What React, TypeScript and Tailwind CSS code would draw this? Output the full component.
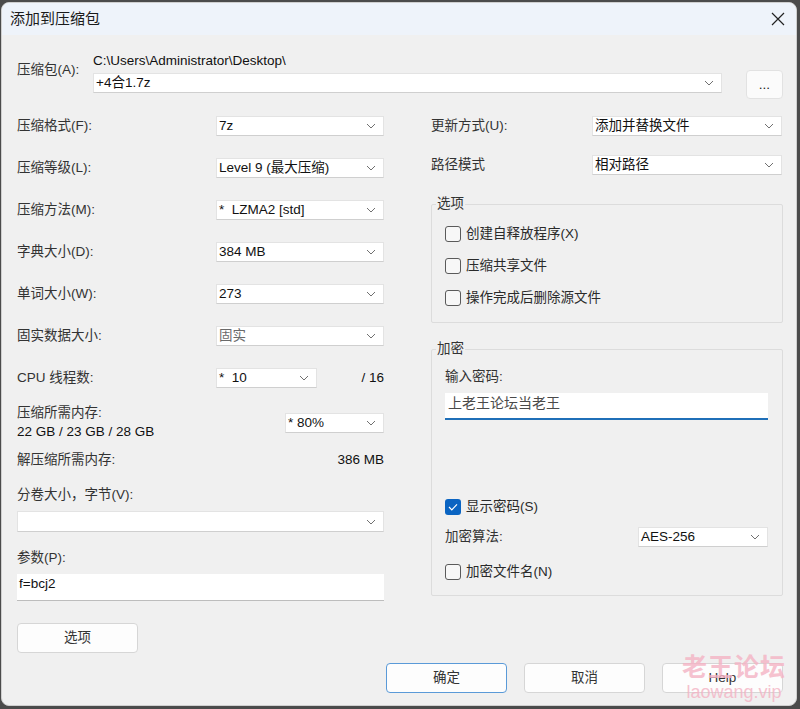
const Chevron = () => (
  <svg width="10" height="6" viewBox="0 0 10 6" className="shrink-0">
    <path d="M1 1l4 4 4-4" fill="none" stroke="#707070" strokeWidth="1" />
  </svg>
);

const Combo = ({ value = "", className = "", muted = false }: { value?: string; className?: string; muted?: boolean }) => (
  <div
    className={`flex items-center justify-between h-[20px] bg-white border border-[#e3e3e3] border-b-[#cfcfcf] pl-[2px] pr-[7px] ${
      muted ? "text-[#6a6a6a]" : "text-[#111]"
    } ${className}`}
  >
    <span className="whitespace-pre">{value}</span>
    <Chevron />
  </div>
);

const Check = ({ label, checked = false }: { label: string; checked?: boolean }) => (
  <div className="flex items-center h-[16px] gap-[5px]">
    {checked ? (
      <div className="w-[16px] h-[16px] rounded-[3px] bg-[#0a64c2] flex items-center justify-center">
        <svg width="10" height="8" viewBox="0 0 10 8">
          <path d="M1 4l2.8 2.8L9 1.3" fill="none" stroke="white" strokeWidth="1.2" />
        </svg>
      </div>
    ) : (
      <div className="w-[16px] h-[16px] rounded-[3px] border border-[#5a5a5a] bg-[#f7f7f7]" />
    )}
    <span className="text-[#2a2a2a]">{label}</span>
  </div>
);

const Row = ({ label, children }: { label: string; children: React.ReactNode }) => (
  <div className="flex items-center h-[20px]">
    <span className="w-[199px] text-[#333]">{label}</span>
    {children}
  </div>
);

const Btn = ({ label, primary = false, className = "" }: { label: string; primary?: boolean; className?: string }) => (
  <div
    className={`flex items-center justify-center h-[30px] rounded-[4px] bg-[#fdfdfd] text-[#333] border ${
      primary ? "border-[#5a9ad8]" : "border-[#d6d6d6]"
    } ${className}`}
  >
    {label}
  </div>
);

export default function App() {
  return (
    <div className="w-[800px] h-[709px] bg-[#4b4b4b] pl-[1px] pt-[2px] font-['Liberation_Sans','Noto_Sans_CJK_SC',sans-serif] text-[13.5px] leading-[16px]">
      <div className="relative w-[796px] h-[704px] rounded-[8px] overflow-hidden bg-[#f0f0f0] border border-[#cfcfcf]">
        {/* title bar */}
        <div className="flex items-center justify-between h-[32px] bg-[#eef3fa] pl-[8px] pr-[11px]">
          <span className="text-[15px] text-[#1a1a1a]">添加到压缩包</span>
          <svg width="14" height="14" viewBox="0 0 14 14">
            <path d="M1 1l12 12M13 1L1 13" stroke="#222" strokeWidth="1.2" />
          </svg>
        </div>

        <div className="pl-[15px] pr-[13px]">
          {/* archive path */}
          <div className="flex pt-[18px]">
            <span className="w-[76px] mt-[9px] text-[#333]">压缩包(A):</span>
            <div className="w-[629px] flex flex-col">
              <span className="text-[#111]">C:\Users\Administrator\Desktop\</span>
              <Combo value="+4合1.7z" className="mt-[4px]" />
            </div>
            <div className="ml-[24px] mt-[17px] w-[37px] h-[29px] rounded-[4px] bg-[#fbfbfb] border border-[#e2e2e2] flex items-center justify-center text-[#222]">
              ...
            </div>
          </div>

          <div className="flex mt-[17px] gap-[47px]">
            {/* left column */}
            <div className="w-[367px] flex flex-col">
              <div className="flex flex-col gap-[22px]">
                <Row label="压缩格式(F):">
                  <Combo value="7z" className="w-[168px]" />
                </Row>
                <Row label="压缩等级(L):">
                  <Combo value="Level 9 (最大压缩)" className="w-[168px]" />
                </Row>
                <Row label="压缩方法(M):">
                  <Combo value="*  LZMA2 [std]" className="w-[168px]" />
                </Row>
                <Row label="字典大小(D):">
                  <Combo value="384 MB" className="w-[168px]" />
                </Row>
                <Row label="单词大小(W):">
                  <Combo value="273" className="w-[168px]" />
                </Row>
                <Row label="固实数据大小:">
                  <Combo value="固实" muted className="w-[168px]" />
                </Row>
                <Row label="CPU 线程数:">
                  <Combo value="*  10" className="w-[101px]" />
                  <span className="ml-auto text-[#111]">/ 16</span>
                </Row>
              </div>

              <div className="flex mt-[17px]">
                <div className="flex flex-col gap-[3px]">
                  <span className="text-[#333]">压缩所需内存:</span>
                  <span className="text-[#111]">22 GB / 23 GB / 28 GB</span>
                </div>
                <Combo value="* 80%" className="ml-auto mt-[8px] w-[99px]" />
              </div>

              <div className="flex justify-between mt-[12px]">
                <span className="text-[#333]">解压缩所需内存:</span>
                <span className="text-[#111]">386 MB</span>
              </div>

              <span className="mt-[19px] text-[#333]">分卷大小，字节(V):</span>
              <Combo className="mt-[8px] h-[21px]" />

              <span className="mt-[18px] text-[#333]">参数(P):</span>
              <div className="mt-[8px] h-[27px] bg-white border-b border-[#bdbdbd] pl-[2px] pt-[2px] text-[#111]">
                f=bcj2
              </div>

              <Btn label="选项" className="mt-[22px] w-[121px] h-[30px]" />
            </div>

            {/* right column */}
            <div className="w-[352px] flex flex-col">
              <div className="flex items-center h-[20px]">
                <span className="w-[161px] text-[#333]">更新方式(U):</span>
                <Combo value="添加并替换文件" className="w-[190px]" />
              </div>
              <div className="flex items-center h-[20px] mt-[19px]">
                <span className="w-[161px] text-[#333]">路径模式</span>
                <Combo value="相对路径" className="w-[190px]" />
              </div>

              <fieldset className="mt-[21px] border border-[#dcdcdc] rounded-[2px] px-0 pt-[14px] pb-[16px]">
                <legend className="ml-[4px] px-[1px] text-[#333]">选项</legend>
                <div className="flex flex-col gap-[16px] px-[13px]">
                  <Check label="创建自释放程序(X)" />
                  <Check label="压缩共享文件" />
                  <Check label="操作完成后删除源文件" />
                </div>
              </fieldset>

              <fieldset className="mt-[18px] border border-[#dcdcdc] rounded-[2px] px-0 pt-[12px] pb-[15px]">
                <legend className="ml-[4px] px-[1px] text-[#333]">加密</legend>
                <div className="pl-[13px] pr-[14px]">
                  <span className="block text-[#333]">输入密码:</span>
                  <div className="mt-[8px] h-[27px] bg-white border-b-2 border-[#1f6fb8] pl-[3px] pt-[2px] text-[14px] text-[#4a4a4a]">
                    上老王论坛当老王
                  </div>
                  <div className="mt-[79px]">
                    <Check label="显示密码(S)" checked />
                  </div>
                  <div className="flex items-center justify-between h-[20px] mt-[12px]">
                    <span className="text-[#333]">加密算法:</span>
                    <Combo value="AES-256" className="w-[130px]" />
                  </div>
                  <div className="mt-[17px]">
                    <Check label="加密文件名(N)" />
                  </div>
                </div>
              </fieldset>
            </div>
          </div>

          {/* bottom buttons */}
          <div className="flex justify-end gap-[17px] mt-[10px]">
            <Btn label="确定" primary className="w-[121px]" />
            <Btn label="取消" className="w-[121px]" />
            <Btn label="Help" className="w-[121px]" />
          </div>
        </div>

        {/* watermark */}
        <div className="absolute left-[680px] top-[649px] flex flex-col items-center text-[#f4b3c4] opacity-80 pointer-events-none">
          <span className="text-[25px] leading-[30px] font-bold tracking-[1px]">老王论坛</span>
          <span className="text-[18px] leading-[20px]">laowang.vip</span>
        </div>
      </div>
    </div>
  );
}
